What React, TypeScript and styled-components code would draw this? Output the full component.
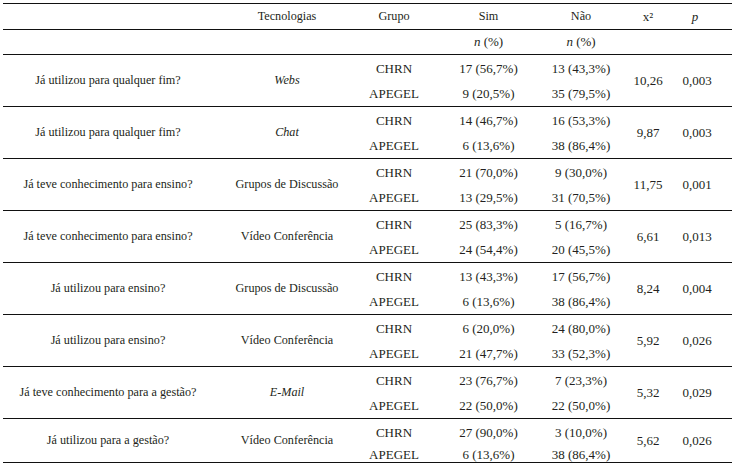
import React from "react";
import styled, { createGlobalStyle } from "styled-components";

const Global = createGlobalStyle`
  html, body { margin: 0; padding: 0; background: #fff; }
  body { font-family: "Liberation Serif", "DejaVu Serif", serif; color: #231f20; }
`;

const cols = "210px 148px 66px 123px 62px 72px 48px";

const Table = styled.div`
  margin: 3px 0 0 3px;
  width: 729px;
  border-top: 1px solid #111;
  font-family: "Liberation Serif", "DejaVu Serif", serif;
  font-size: 13px;
  color: #231f20;
`;

const Row = styled.div<{ $h: number }>`
  display: grid;
  grid-template-columns: ${cols};
  height: ${(p) => p.$h}px;
  box-sizing: border-box;
  border-bottom: 1px solid #111;
  align-items: center;
`;

const Group = styled.div<{ $r1: number; $r2: number }>`
  display: grid;
  grid-template-columns: ${cols};
  grid-template-rows: ${(p) => p.$r1}px ${(p) => p.$r2}px;
  border-bottom: 1px solid #111;
`;

const Cell = styled.div<{ $span?: boolean; $italic?: boolean; $col?: number; $pr?: number; $text?: boolean }>`
  display: flex;
  align-items: center;
  justify-content: center;
  white-space: nowrap;
  font-family: "Liberation Serif", "DejaVu Serif", serif;
  font-size: ${(p) => (p.$text ? "12.2px" : "13px")};
  font-style: ${(p) => (p.$italic ? "italic" : "normal")};
  grid-row: ${(p) => (p.$span ? "1 / span 2" : "auto")};
  grid-column: ${(p) => (p.$col ? p.$col : "auto")};
  padding-right: ${(p) => p.$pr ?? 0}px;
  height: 100%;
`;

type G = {
  q: string;
  t: string;
  ti?: boolean;
  a: [string, string];
  b: [string, string];
  x: string;
  p: string;
};

const data: G[] = [
  { q: "Já utilizou para qualquer fim?", t: "Webs", ti: true, a: ["17 (56,7%)", "13 (43,3%)"], b: ["9 (20,5%)", "35 (79,5%)"], x: "10,26", p: "0,003" },
  { q: "Já utilizou para qualquer fim?", t: "Chat", ti: true, a: ["14 (46,7%)", "16 (53,3%)"], b: ["6 (13,6%)", "38 (86,4%)"], x: "9,87", p: "0,003" },
  { q: "Já teve conhecimento para ensino?", t: "Grupos de Discussão", a: ["21 (70,0%)", "9 (30,0%)"], b: ["13 (29,5%)", "31 (70,5%)"], x: "11,75", p: "0,001" },
  { q: "Já teve conhecimento para ensino?", t: "Vídeo Conferência", a: ["25 (83,3%)", "5 (16,7%)"], b: ["24 (54,4%)", "20 (45,5%)"], x: "6,61", p: "0,013" },
  { q: "Já utilizou para ensino?", t: "Grupos de Discussão", a: ["13 (43,3%)", "17 (56,7%)"], b: ["6 (13,6%)", "38 (86,4%)"], x: "8,24", p: "0,004" },
  { q: "Já utilizou para ensino?", t: "Vídeo Conferência", a: ["6 (20,0%)", "24 (80,0%)"], b: ["21 (47,7%)", "33 (52,3%)"], x: "5,92", p: "0,026" },
  { q: "Já teve conhecimento para a gestão?", t: "E-Mail", ti: true, a: ["23 (76,7%)", "7 (23,3%)"], b: ["22 (50,0%)", "22 (50,0%)"], x: "5,32", p: "0,029" },
  { q: "Já utilizou para a gestão?", t: "Vídeo Conferência", a: ["27 (90,0%)", "3 (10,0%)"], b: ["6 (13,6%)", "38 (86,4%)"], x: "5,62", p: "0,026" },
];

export default function App() {
  return (
    <>
      <Global />
      <Table>
        <Row $h={26}>
          <Cell />
          <Cell $text>Tecnologias</Cell>
          <Cell $text>Grupo</Cell>
          <Cell $text>Sim</Cell>
          <Cell $text>Não</Cell>
          <Cell>x²</Cell>
          <Cell $italic $pr={26}>p</Cell>
        </Row>
        <Row $h={25}>
          <Cell />
          <Cell />
          <Cell />
          <Cell><i>n</i>&nbsp;(%)</Cell>
          <Cell><i>n</i>&nbsp;(%)</Cell>
          <Cell />
          <Cell />
        </Row>
        {data.map((g, i) => {
          const last = i === data.length - 1;
          return (
            <Group key={i} $r1={last ? 28 : 27} $r2={last ? 15 : 24}>
              <Cell $span $col={1} $text>{g.q}</Cell>
              <Cell $span $col={2} $text $italic={g.ti}>{g.t}</Cell>
              <Cell $col={3}>CHRN</Cell>
              <Cell $col={4}>{g.a[0]}</Cell>
              <Cell $col={5}>{g.a[1]}</Cell>
              <Cell $span $col={6}>{g.x}</Cell>
              <Cell $span $col={7} $pr={22}>{g.p}</Cell>
              <Cell $col={3}>APEGEL</Cell>
              <Cell $col={4}>{g.b[0]}</Cell>
              <Cell $col={5}>{g.b[1]}</Cell>
            </Group>
          );
        })}
      </Table>
    </>
  );
}
